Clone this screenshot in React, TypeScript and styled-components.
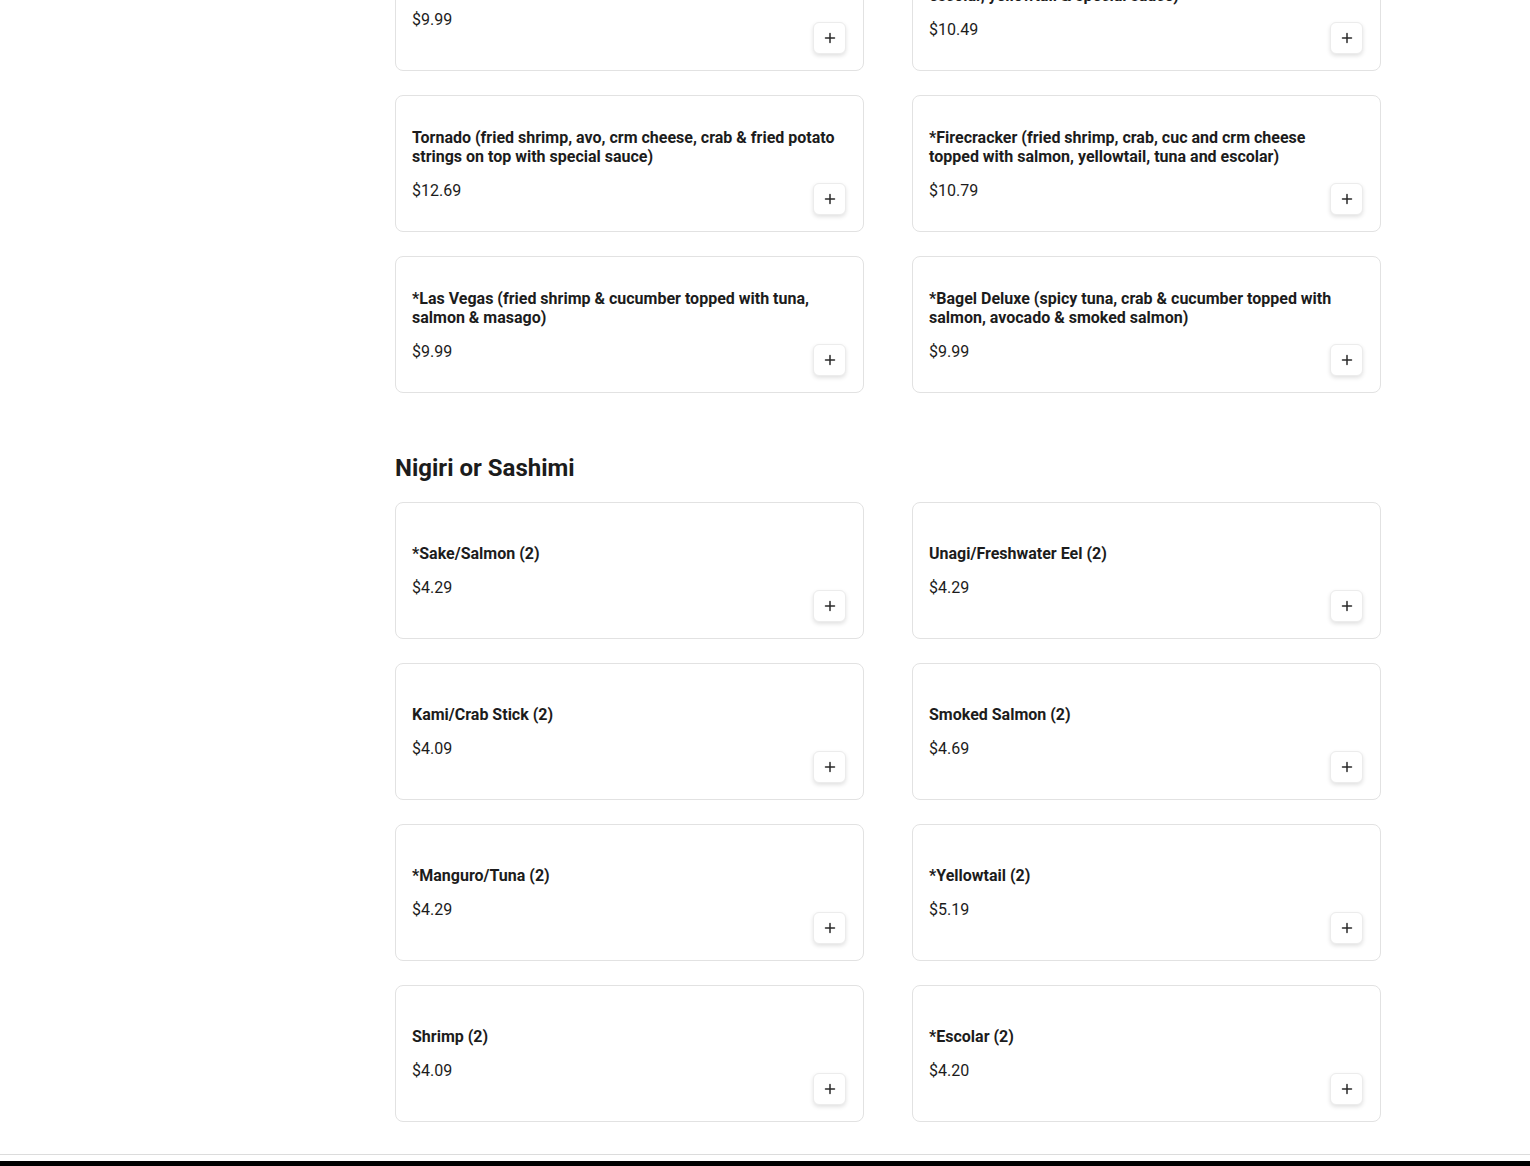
import React from "react";
import styled, { createGlobalStyle } from "styled-components";

const GlobalStyle = createGlobalStyle`
  * { box-sizing: border-box; }
  html, body { margin: 0; padding: 0; background: #ffffff; }
  body {
    font-family: Roboto, "Liberation Sans", Arial, sans-serif;
    color: #1c1c1c;
    -webkit-font-smoothing: antialiased;
  }
`;

type Item = { name: string; price: string };
type Section = { title: string; items: Item[] };

const sections: Section[] = [
  {
    title: "Special Rolls",
    items: [
      { name: "*Spider Roll (2)", price: "$9.99" },
      {
        name: "*Dragon (shrimp tempura & crm cheese topped with tuna, escolar, yellowtail & special sauce)",
        price: "$10.49",
      },
      {
        name: "Tornado (fried shrimp, avo, crm cheese, crab & fried potato strings on top with special sauce)",
        price: "$12.69",
      },
      {
        name: "*Firecracker (fried shrimp, crab, cuc and crm cheese topped with salmon, yellowtail, tuna and escolar)",
        price: "$10.79",
      },
      {
        name: "*Las Vegas (fried shrimp & cucumber topped with tuna, salmon & masago)",
        price: "$9.99",
      },
      {
        name: "*Bagel Deluxe (spicy tuna, crab & cucumber topped with salmon, avocado & smoked salmon)",
        price: "$9.99",
      },
    ],
  },
  {
    title: "Nigiri or Sashimi",
    items: [
      { name: "*Sake/Salmon (2)", price: "$4.29" },
      { name: "Unagi/Freshwater Eel (2)", price: "$4.29" },
      { name: "Kami/Crab Stick (2)", price: "$4.09" },
      { name: "Smoked Salmon (2)", price: "$4.69" },
      { name: "*Manguro/Tuna (2)", price: "$4.29" },
      { name: "*Yellowtail (2)", price: "$5.19" },
      { name: "Shrimp (2)", price: "$4.09" },
      { name: "*Escolar (2)", price: "$4.20" },
    ],
  },
];

const Layout = styled.div`
  display: grid;
  grid-template-columns: 371px 986px;
  column-gap: 24px;
  margin-top: -66px;
`;

const Aside = styled.aside``;

const Main = styled.main`
  display: flex;
  flex-direction: column;
  gap: 61px;
  padding-bottom: 32px;
`;

const SectionBlock = styled.section`
  display: flex;
  flex-direction: column;
`;

const SectionTitle = styled.h2`
  margin: 0 0 19px;
  font-size: 24px;
  line-height: 29px;
  font-weight: 700;
  color: #1c1c1c;
`;

const Grid = styled.div`
  display: grid;
  grid-template-columns: 1fr 1fr;
  column-gap: 48px;
  row-gap: 24px;
`;

const Card = styled.div`
  height: 137px;
  border: 1px solid #e2e2e2;
  border-radius: 8px;
  background: #fff;
  padding: 16px;
  display: grid;
  grid-template-columns: 1fr;
  grid-template-rows: 1fr;
  & > * {
    grid-area: 1 / 1;
  }
`;

const Info = styled.div`
  align-self: center;
  padding-right: 9px;
  display: flex;
  flex-direction: column;
  gap: 15px;
`;

const Name = styled.div`
  font-size: 16px;
  line-height: 19px;
  font-weight: 700;
  color: #1c1c1c;
`;

const Price = styled.div`
  font-size: 16px;
  line-height: 19px;
  font-weight: 400;
  color: #1c1c1c;
`;

const AddButton = styled.button`
  align-self: end;
  justify-self: end;
  width: 33px;
  height: 32px;
  margin-right: 1px;
  border: 1px solid #ececec;
  border-radius: 6px;
  background: #fff;
  box-shadow: 0 2px 4px rgba(0, 0, 0, 0.12);
  display: flex;
  align-items: center;
  justify-content: center;
  padding: 0;
  cursor: pointer;
  color: #2a2a2a;
`;

const Divider = styled.div`
  border-top: 1px solid #dcdcdc;
  height: 7px;
`;

const Footer = styled.footer`
  background: #000;
  height: 60px;
`;

const Plus = () => (
  <svg width="12" height="12" viewBox="0 0 12 12" aria-hidden="true">
    <path d="M6 1.5v9M1.5 6h9" stroke="currentColor" strokeWidth="1.5" strokeLinecap="round" />
  </svg>
);

export default function App() {
  return (
    <>
      <GlobalStyle />
      <Layout>
        <Aside />
        <Main>
          {sections.map((s, i) => (
            <SectionBlock key={s.title}>
              {i > 0 && <SectionTitle>{s.title}</SectionTitle>}
              <Grid>
                {s.items.map((it) => (
                  <Card key={it.name}>
                    <Info>
                      <Name>{it.name}</Name>
                      <Price>{it.price}</Price>
                    </Info>
                    <AddButton aria-label={`Add ${it.name}`}>
                      <Plus />
                    </AddButton>
                  </Card>
                ))}
              </Grid>
            </SectionBlock>
          ))}
        </Main>
      </Layout>
      <Divider />
      <Footer />
    </>
  );
}
